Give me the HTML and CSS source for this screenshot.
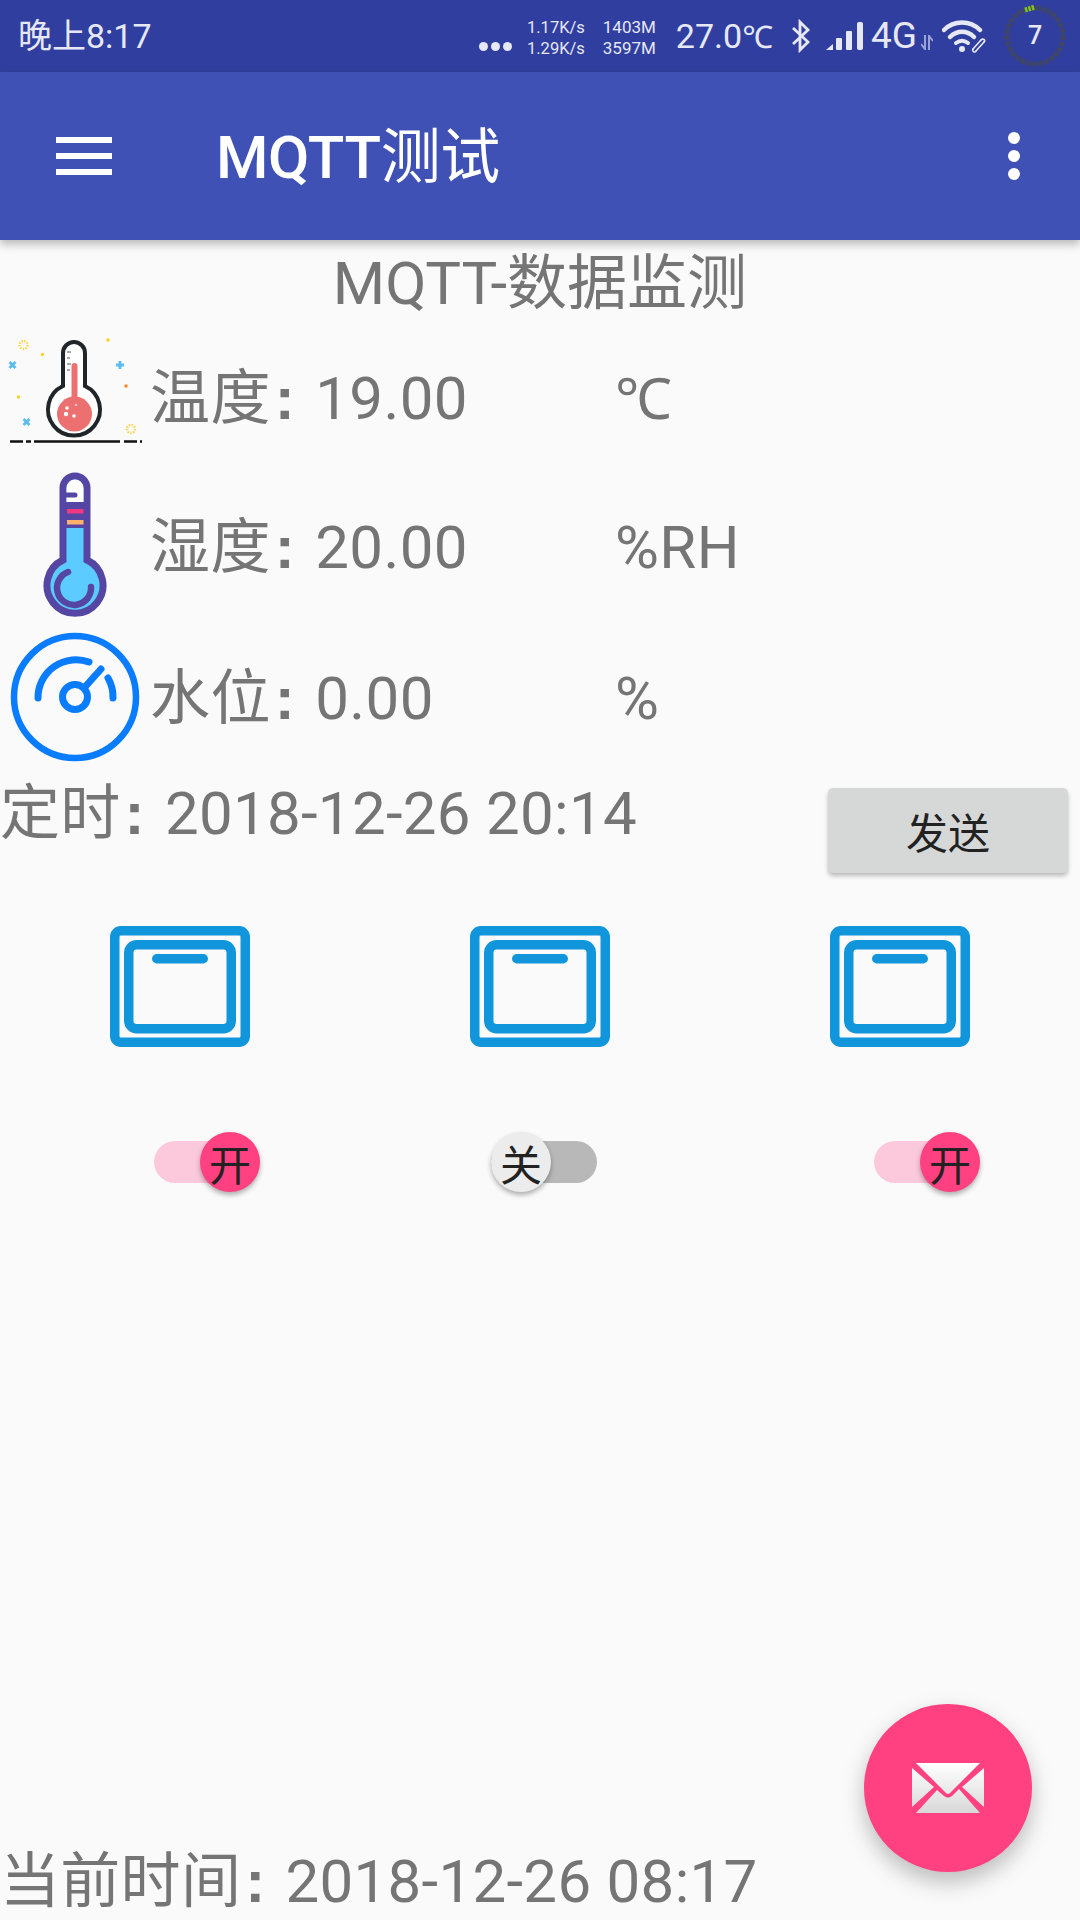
FILE: index.html
```html
<!DOCTYPE html>
<html lang="zh-CN">
<head>
    <meta charset="UTF-8">
    <meta name="viewport" content="width=device-width, initial-scale=1.0">
    <title>MQTT测试</title>
    <link rel="stylesheet" href="styles.css">
</head>
<body>

<div class="statusbar">
    <span class="clock">晚上8:17</span>
    <div class="status-right">
        <div class="more-dots"><i></i><i></i><i></i></div>
        <div class="speed"><span>1.17K/s</span><span>1.29K/s</span></div>
        <div class="speed mem"><span>1403M</span><span>3597M</span></div>
        <span class="temp">27.0<span class="deg">℃</span></span>
        <svg class="ic-bt" width="20" height="34" viewBox="0 0 20 34"><path d="M2 9 L17 23 L9 31 L9 3 L17 11 L2 25" fill="none" stroke="#e6e8f5" stroke-width="2.800"/></svg>
        <svg class="ic-signal" width="38" height="28" viewBox="0 0 38 28" fill="#e6e8f5">
            <path d="M0 28 L7 22 V28Z"/><rect x="10" y="16" width="6" height="12" rx="1"/><rect x="20" y="9" width="6" height="19" rx="1"/><rect x="31" y="0" width="6" height="28" rx="2"/>
        </svg>
        <span class="net">4G</span>
        <svg class="ic-arrows" width="12" height="15" viewBox="0 0 12 15"><path d="M4 0 V14 L0 9 M8 15 V1 L12 6" fill="none" stroke="#9aa2d6" stroke-width="2"/></svg>
        <svg class="ic-wifi" width="46" height="33" viewBox="0 0 46 33" fill="none" stroke="#e6e8f5" stroke-linecap="round">
            <path d="M2 10 C12 0 28 0 38 10" stroke-width="4.500"/>
            <path d="M8 17 C15 10 25 10 32 17" stroke-width="4.500"/>
            <path d="M14 23 C18 20 22 20 26 23" stroke-width="4"/>
            <circle cx="20" cy="29" r="3" fill="#e6e8f5" stroke="none"/>
            <path d="M31 29 L39 20 M34 31 L42 22" stroke-width="1.600"/>
            <path d="M31 29 C30 32 33 33 34 31 M39 20 C41 18 44 20 42 22" stroke-width="1.600"/>
        </svg>
        <div class="battery">
            <svg class="battery-ring" width="62" height="62" viewBox="0 0 62 62">
                <circle cx="31" cy="31" r="28" fill="none" stroke="#3f4664" stroke-width="5" stroke-dasharray="4.500 1.500"/>
                <path d="M21 5 L31 2" fill="none" stroke="#7fc31c" stroke-width="5" stroke-dasharray="2.500 1"/>
            </svg>
            <span class="battery-num">7</span>
        </div>
    </div>
</div>

<div class="toolbar">
    <div class="hamburger"><i></i><i></i><i></i></div>
    <h1 class="toolbar-title">MQTT<span class="cjk">测试</span></h1>
    <div class="overflow-dots"><i></i><i></i><i></i></div>
</div>

<main class="content">
    <h2 class="page-title">MQTT-数据监测</h2>

    <div class="reading reading-temp">
        <svg class="reading-icon" viewBox="0 326 150 144">
            <path d="M63 386 V353 A11 11 0 0 1 85 353 V386 A26 26 0 1 1 63 386Z" fill="#fff" stroke="#1f2528" stroke-width="4"/>
            <circle cx="74.500" cy="414" r="17.500" fill="#ec7070"/>
            <rect x="71.500" y="363" width="6" height="38" rx="3" fill="#ec7070"/>
            <path d="M67 352 H71 M67 358 H70 M67 364 H71 M67 370 H70" stroke="#555" stroke-width="1"/>
            <circle cx="67" cy="408" r="1.800" fill="#fff"/><circle cx="66" cy="414" r="2.200" fill="#fff"/><circle cx="74" cy="416" r="1.800" fill="#fff"/><circle cx="76" cy="405" r="1.300" fill="#fbd"/>
            <path d="M10 441.500 H23 M26 441.500 H31 M34 441.500 H120 M124 441.500 H137 M140 441.500 H142" stroke="#111" stroke-width="2.400"/>
            <circle cx="23.500" cy="345" r="4" fill="none" stroke="#fbd85a" stroke-width="2.500" stroke-dasharray="1.500 1.200"/>
            <circle cx="131" cy="429" r="4" fill="none" stroke="#fbd85a" stroke-width="2.500" stroke-dasharray="1.500 1.200"/>
            <circle cx="42.500" cy="354.500" r="1.700" fill="#ffd21f"/><circle cx="108" cy="340" r="1.800" fill="#ffd21f"/><circle cx="18.500" cy="397" r="1.700" fill="#ffd21f"/><circle cx="126" cy="386" r="1.800" fill="#f58a2c"/>
            <path d="M120 361 V369 M116 365 H124 M9.500 362 L15.500 368 M15.500 362 L9.500 368 M23.500 419 L29.500 425 M29.500 419 L23.500 425" stroke="#5bbcf0" stroke-width="2.800"/>
        </svg>
        <span class="reading-text">温度<span class="colon">:</span>19.00</span>
        <span class="reading-text"><span class="deg">℃</span></span>
    </div>

    <div class="reading reading-hum">
        <svg class="reading-icon" viewBox="0 470 150 154">
            <path d="M63 560 V488 A12 12 0 0 1 87 488 V560 A28 28 0 1 1 63 560Z" fill="#5ccbff" stroke="#5546a3" stroke-width="7"/>
            <path d="M66.500 528 V488 A8.500 8.500 0 0 1 83.500 488 V528Z" fill="#fff"/>
            <rect x="64" y="502" width="22" height="26" fill="#5546a3"/>
            <rect x="67" y="509" width="16.500" height="4.500" fill="#f0397f"/>
            <rect x="67" y="520" width="16.500" height="4.500" fill="#ffb26b"/>
            <path d="M66.500 495 H75" stroke="#5546a3" stroke-width="5" stroke-linecap="round"/>
            <path d="M68 572 A17 17 0 1 0 91 587" fill="none" stroke="#5546a3" stroke-width="6.500" stroke-linecap="round"/>
        </svg>
        <span class="reading-text">湿度<span class="colon">:</span>20.00</span>
        <span class="reading-text">%RH</span>
    </div>

    <div class="reading reading-water">
        <svg class="reading-icon" viewBox="0 624 150 148">
            <g fill="none" stroke="#0a7cff" stroke-linecap="round">
                <circle cx="75" cy="697" r="61" stroke-width="6.500"/>
                <circle cx="75" cy="697" r="12.500" stroke-width="7"/>
                <path d="M84 688 L101 669" stroke-width="7"/>
                <path d="M38 698 A38 38 0 0 1 89 662" stroke-width="7"/>
                <path d="M108 678 A38 38 0 0 1 113 698" stroke-width="7"/>
            </g>
        </svg>
        <span class="reading-text">水位<span class="colon">:</span>0.00</span>
        <span class="reading-text">%</span>
    </div>

    <div class="timer-row">
        <span class="timer-text">定时<span class="colon">:</span>2018-12-26 20:14</span>
        <button class="send-btn">发送</button>
    </div>

    <div class="windows">
        <svg class="window-icon" viewBox="0 0 140 121"><use href="#window"/></svg>
        <svg class="window-icon" viewBox="0 0 140 121"><use href="#window"/></svg>
        <svg class="window-icon" viewBox="0 0 140 121"><use href="#window"/></svg>
    </div>

    <div class="switches">
        <div class="switch switch-on"><span class="thumb">开</span></div>
        <div class="switch switch-off"><span class="thumb">关</span></div>
        <div class="switch switch-on"><span class="thumb">开</span></div>
    </div>

    <p class="now-text">当前时间<span class="colon">:</span>2018-12-26 08:17</p>
</main>

<button class="fab">
    <svg class="mail" width="72" height="50" viewBox="0 0 72 50">
        <defs>
            <linearGradient id="mailfill" gradientUnits="userSpaceOnUse" x1="0" y1="0" x2="0" y2="50">
                <stop offset="0" stop-color="#ffffff"/><stop offset="1" stop-color="#d8d8d8"/>
            </linearGradient>
        </defs>
        <path d="M4 0 H68 L38 30 Q36 32 34 30Z" fill="url(#mailfill)"/>
        <path d="M0 5 L22 24 L0 44Z M72 5 L50 24 L72 44Z" fill="url(#mailfill)"/>
        <path d="M4 50 L25 27 L32 33 Q36 36 40 33 L47 26 L68 50Z" fill="url(#mailfill)"/>
    </svg>
</button>

<svg class="defs" width="0" height="0">
    <symbol id="window" viewBox="0 0 140 121">
        <g fill="none" stroke="#1296db" stroke-width="9.500">
            <rect x="4.750" y="4.750" width="130.500" height="111.500" rx="6"/>
            <rect x="18.750" y="18.750" width="102.500" height="84" rx="8"/>
        </g>
        <rect x="42" y="28" width="56" height="9.500" rx="4.700" fill="#1296db"/>
    </symbol>
</svg>

</body>
</html>
```

FILE: styles.css
```css
* {
    box-sizing: border-box;
}

body {
    margin: 0;
    width: 1080px;
    height: 1920px;
    overflow: hidden;
    position: relative;
    display: flex;
    flex-direction: column;
    background-color: #fafafa;
    font-family: Roboto, "Noto Sans CJK SC", sans-serif;
    color: #757575;
}

/* status bar */
.statusbar {
    height: 72px;
    flex: none;
    display: flex;
    align-items: center;
    justify-content: space-between;
    padding-left: 18px;
    background-color: #303f9f;
    color: #e6e8f5;
}

.clock {
    font-size: 34px;
    line-height: 44px;
}

.status-right {
    display: flex;
    align-items: center;
    padding-right: 14px;
}

.more-dots {
    display: flex;
    gap: 3px;
    margin-top: 20px;
}

.more-dots i {
    width: 9px;
    height: 9px;
    border-radius: 50%;
    background-color: #e6e8f5;
}

.speed {
    display: flex;
    flex-direction: column;
    align-items: flex-end;
    width: 58px;
    margin-left: 15px;
    margin-top: 3px;
    font-size: 16.500px;
    line-height: 21px;
}

.speed.mem {
    width: 55px;
    margin-left: 16px;
    font-size: 17px;
}

.temp {
    font-size: 34px;
    line-height: 44px;
    margin-left: 20px;
}

/* roboto's degree sign is too far from the C, this one is closer */
.deg {
    font-family: "Noto Sans", sans-serif;
    font-size: 57px;
    line-height: 0;
}

.temp .deg {
    font-size: 31px;
}

.ic-bt {
    margin-left: 18px;
}

.ic-signal {
    margin-left: 15px;
}

.net {
    font-size: 37px;
    line-height: 44px;
    margin-left: 7px;
}

.ic-arrows {
    margin-left: 4px;
    margin-top: 13px;
}

.ic-wifi {
    margin-left: 9px;
}

.battery {
    position: relative;
    width: 62px;
    height: 62px;
    margin-left: 16px;
}

.battery-ring {
    display: block;
}

.battery-num {
    position: absolute;
    left: 0;
    right: 0;
    top: 14px;
    text-align: center;
    font-size: 25px;
    line-height: 34px;
    font-weight: 500;
}

/* toolbar */
.toolbar {
    height: 168px;
    flex: none;
    display: flex;
    align-items: center;
    padding-left: 56px;
    padding-right: 60px;
    background-color: #3f51b5;
    color: white;
    box-shadow: 0 4px 9px rgba(0, 0, 0, 0.28);
    position: relative;
}

.hamburger {
    display: flex;
    flex-direction: column;
    gap: 10px;
    width: 56px;
}

.hamburger i {
    height: 6px;
    background-color: white;
}

.toolbar-title {
    margin: 4px 0 0 104px;
    flex: 1;
    font-size: 60px;
    font-weight: 500;
    line-height: 80px;
    letter-spacing: -0.400px;
}

.toolbar-title .cjk {
    font-weight: 400;
}

.overflow-dots {
    display: flex;
    flex-direction: column;
    gap: 6px;
}

.overflow-dots i {
    width: 12px;
    height: 12px;
    border-radius: 50%;
    background-color: white;
}

/* page */
.content {
    flex: 1;
    display: flex;
    flex-direction: column;
}

.page-title {
    margin: 0;
    height: 86px;
    text-align: center;
    font-size: 60px;
    font-weight: 400;
    line-height: 88px;
}

.reading {
    display: grid;
    grid-template-columns: 150px 465px auto;
    align-items: center;
    font-size: 60px;
}

.reading-text {
    line-height: 73px;
    letter-spacing: 0.400px;
}

.reading-temp {
    height: 144px;
}

.reading-hum {
    height: 154px;
}

.reading-water {
    height: 148px;
}

.reading-icon {
    display: block;
    width: 150px;
    height: 100%;
}

.colon {
    font-family: "Liberation Sans", sans-serif;
    font-weight: 700;
    margin-left: 4px;
    margin-right: 20px;
    line-height: 0;
}

.timer-row {
    display: flex;
    justify-content: space-between;
    align-items: flex-start;
    padding-right: 12px;
}

.timer-text {
    font-size: 60px;
    line-height: 84px;
    letter-spacing: 0.300px;
}

.send-btn {
    width: 240px;
    height: 85px;
    margin-top: 16px;
    border: 0;
    border-radius: 5px;
    background-color: #d6d7d7;
    color: #222;
    font-family: inherit;
    font-size: 42px;
    box-shadow: 0 3px 4px rgba(0, 0, 0, 0.25);
}

.windows {
    display: grid;
    grid-template-columns: repeat(3, 360px);
    justify-items: center;
    margin-top: 53px;
}

.window-icon {
    display: block;
    width: 140px;
    height: 121px;
}

.switches {
    display: grid;
    grid-template-columns: repeat(3, 360px);
    margin-top: 85px;
}

.switch {
    position: relative;
    width: 106px;
    height: 42px;
    margin: 9px 0;
    border-radius: 21px;
}

.switch:nth-child(1),
.switch:nth-child(3) {
    margin-left: 154px;
}

.switch:nth-child(2) {
    margin-left: 131px;
}

.switch-on {
    background-color: #fcc8db;
}

.switch-off {
    background-color: #b8b8b8;
}

.thumb {
    position: absolute;
    top: -9px;
    width: 60px;
    height: 60px;
    border-radius: 50%;
    display: flex;
    align-items: center;
    justify-content: center;
    font-size: 42px;
    color: #222;
    box-shadow: 0 3px 5px rgba(0, 0, 0, 0.3);
}

.switch-on .thumb {
    right: 0;
    background-color: #ff4081;
}

.switch-off .thumb {
    left: 0;
    background-color: #ececec;
}

.now-text {
    margin: auto 0 0;
    font-size: 60px;
    line-height: 76px;
    letter-spacing: 0.300px;
}

.fab {
    position: absolute;
    left: 864px;
    top: 1704px;
    width: 168px;
    height: 168px;
    padding: 0;
    border: 0;
    border-radius: 50%;
    background-color: #ff4081;
    display: flex;
    align-items: center;
    justify-content: center;
    box-shadow: 0 10px 22px rgba(0, 0, 0, 0.25);
}

.mail {
    filter: blur(0.6px);
}

.defs {
    position: absolute;
}
```
